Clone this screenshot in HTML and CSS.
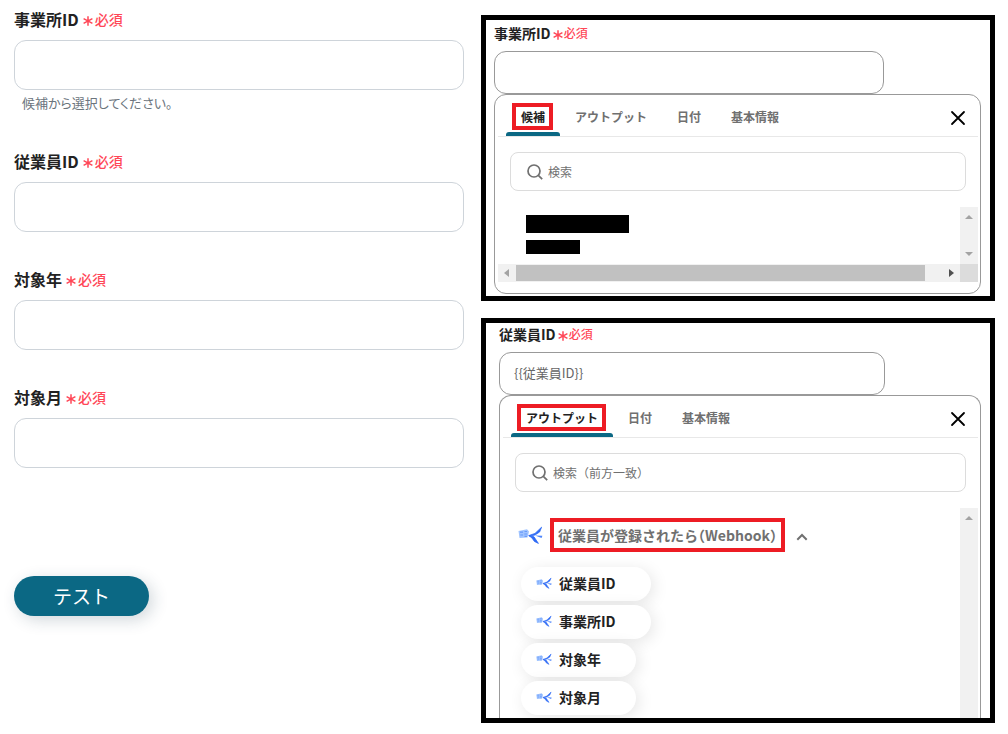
FILE: index.html
```html
<!DOCTYPE html>
<html lang="ja">
<head>
  <meta charset="UTF-8">
  <meta name="viewport" content="width=device-width, initial-scale=1.0">
  <title>テスト</title>
  <link rel="stylesheet" href="styles.css">
</head>
<body>
  <svg width="0" height="0" class="sprite" aria-hidden="true">
    <symbol id="asterisk" viewBox="0 0 10 10">
      <path d="M5 0.3V9.7M0.6 2.6L9.4 7.4M9.4 2.6L0.6 7.4" stroke="currentColor" stroke-width="1.5" fill="none"/>
    </symbol>
    <symbol id="close" viewBox="0 0 16 16">
      <path d="M2 2L14 14M14 2L2 14" stroke="currentColor" stroke-width="1.8" stroke-linecap="round" fill="none"/>
    </symbol>
    <symbol id="search" viewBox="0 0 16 16">
      <circle cx="7" cy="7" r="6" stroke="currentColor" stroke-width="1.7" fill="none"/>
      <path d="M11.3 11.3L15.2 15.2" stroke="currentColor" stroke-width="1.7" fill="none"/>
    </symbol>
    <symbol id="chevron" viewBox="0 0 12 8">
      <path d="M1.3 6.7L6 2L10.7 6.7" stroke="currentColor" stroke-width="2" fill="none"/>
    </symbol>
    <symbol id="app" viewBox="0 0 25 18">
      <path d="M0.5 5L9 3.2L11 5.5L9.5 11.5L1.5 12Z" fill="#9fc3ff"/>
      <path d="M2 6.2H5M2.3 9H5M6.5 5.5H9M6.3 8H9.2M6.5 10.3H9" stroke="#6a9bfa" stroke-width="1.2" fill="none"/>
      <g fill="#2f6bf5" stroke="#2f6bf5" stroke-width="0.8" stroke-linejoin="round">
        <path d="M10.8 9.6L17 7.4L23.6 1.2L21.6 6L17 9L12 10Z"/>
        <path d="M10.8 9.6L16 10.8L20.4 17.4L16.4 15.4L14 12Z"/>
      </g>
      <path d="M17 9.5L24.4 9.8L23.6 12Z" fill="#4f86fb"/>
    </symbol>
  </svg>

  <main class="layout">
    <form class="test-form">
      <div class="field">
        <label for="office">事業所ID <span class="required"><svg class="asterisk"><use href="#asterisk"/></svg>必須</span></label>
        <input type="text" id="office">
        <p class="help">候補から選択してください。</p>
      </div>
      <div class="field">
        <label for="employee">従業員ID <span class="required"><svg class="asterisk"><use href="#asterisk"/></svg>必須</span></label>
        <input type="text" id="employee">
      </div>
      <div class="field">
        <label for="year">対象年 <span class="required"><svg class="asterisk"><use href="#asterisk"/></svg>必須</span></label>
        <input type="text" id="year">
      </div>
      <div class="field">
        <label for="month">対象月 <span class="required"><svg class="asterisk"><use href="#asterisk"/></svg>必須</span></label>
        <input type="text" id="month">
      </div>
      <button type="button" class="test-btn">テスト</button>
    </form>

    <div class="panels">
      <section class="panel">
        <label class="panel-label" for="office-pick">事業所ID <span class="required"><svg class="asterisk"><use href="#asterisk"/></svg>必須</span></label>
        <input type="text" class="pick-input" id="office-pick">
        <div class="popup">
          <div class="tabs">
            <button type="button" class="tab active"><span class="mark">候補</span></button>
            <button type="button" class="tab">アウトプット</button>
            <button type="button" class="tab">日付</button>
            <button type="button" class="tab">基本情報</button>
            <button type="button" class="close" aria-label="閉じる"><svg><use href="#close"/></svg></button>
          </div>
          <div class="search">
            <svg><use href="#search"/></svg>
            <input type="text" placeholder="検索" aria-label="検索">
          </div>
          <div class="scroll-area">
            <div class="candidates">
              <div class="masked long"></div>
              <div class="masked short"></div>
            </div>
            <div class="scroll-y">
              <span class="arrow up"></span>
              <span class="arrow down"></span>
            </div>
            <div class="scroll-x">
              <span class="arrow left"></span>
              <span class="thumb"></span>
              <span class="arrow right"></span>
            </div>
            <div class="scroll-corner"></div>
          </div>
        </div>
      </section>

      <section class="panel output-panel">
        <label class="panel-label" for="employee-pick">従業員ID <span class="required"><svg class="asterisk"><use href="#asterisk"/></svg>必須</span></label>
        <input type="text" class="pick-input" id="employee-pick" value="{{従業員ID}}">
        <div class="popup cut">
          <div class="tabs">
            <button type="button" class="tab active"><span class="mark">アウトプット</span></button>
            <button type="button" class="tab">日付</button>
            <button type="button" class="tab">基本情報</button>
            <button type="button" class="close" aria-label="閉じる"><svg><use href="#close"/></svg></button>
          </div>
          <div class="search">
            <svg><use href="#search"/></svg>
            <input type="text" placeholder="検索（前方一致）" aria-label="検索（前方一致）">
          </div>
          <div class="scroll-area">
            <div class="outputs">
              <div class="group">
                <svg class="app-icon"><use href="#app"/></svg>
                <span class="mark">従業員が登録されたら（Webhook）</span>
                <svg class="chevron"><use href="#chevron"/></svg>
              </div>
              <div class="chips">
                <button type="button" class="chip"><svg><use href="#app"/></svg>従業員ID</button>
                <button type="button" class="chip"><svg><use href="#app"/></svg>事業所ID</button>
                <button type="button" class="chip"><svg><use href="#app"/></svg>対象年</button>
                <button type="button" class="chip"><svg><use href="#app"/></svg>対象月</button>
              </div>
            </div>
            <div class="scroll-y">
              <span class="arrow up"></span>
            </div>
          </div>
        </div>
      </section>
    </div>
  </main>
</body>
</html>
```
FILE: styles.css
```css
:root {
  --accent: #0b6884;
  --required: #ff4757;
  --mark: #ed1c24;
  --muted: #707070;
}

* {
  box-sizing: border-box;
}

body {
  margin: 0;
  background: #fff;
  color: #222;
  font-family: "Noto Sans CJK JP", sans-serif;
}

input, button {
  font-family: inherit;
  margin: 0;
}

button {
  padding: 0;
  border: none;
  background: none;
  cursor: pointer;
}

.sprite {
  position: absolute;
}

.layout {
  display: grid;
  grid-template-columns: 450fr 514fr;
  gap: 17px;
  padding: 0 13px 0 14px;
}

/* left form */
.test-form {
  padding-top: 8px;
}

.field {
  margin-bottom: 36px;
}

label {
  display: flex;
  align-items: center;
  gap: 4px;
  font-weight: bold;
}

.field label {
  height: 24px;
  margin-bottom: 8px;
  padding-bottom: 2px;
  font-size: 16px;
}

.required {
  display: flex;
  align-items: center;
  gap: 2px;
  color: var(--required);
  font-size: 14px;
  font-weight: 500;
}

.asterisk {
  width: 10px;
  height: 10px;
  margin-top: 4px;
}

.field input {
  display: block;
  width: 100%;
  height: 50px;
  padding: 0 16px;
  border: 1px solid #ced4da;
  border-radius: 12px;
  font-size: 16px;
}

.help {
  margin: 3px 0 0;
  padding: 0 0 1px 8px;
  color: #6c757d;
  font-size: 13px;
  font-feature-settings: "palt";
  line-height: 20px;
}

.test-btn {
  width: 135px;
  height: 40px;
  margin-top: 72px;
  padding-bottom: 2px;
  border-radius: 20px;
  background: var(--accent);
  color: #fff;
  font-size: 19px;
  box-shadow: 4px 4px 16px rgba(30, 60, 80, 0.2);
}

/* framed panels */
.panels {
  display: flex;
  flex-direction: column;
  gap: 17px;
  padding-top: 15px;
}

.panel {
  padding: 2px 9px 2px 8px;
  border: 5px solid #000;
  overflow: hidden;
}

.output-panel {
  padding: 0 9px 0 13px;
}

.panel-label {
  gap: 2px;
  height: 22px;
  margin-bottom: 7px;
  padding-bottom: 1px;
  font-size: 14px;
}

.panel-label .required {
  gap: 1px;
  font-size: 12px;
}

.pick-input {
  display: block;
  width: 80%;
  height: 43px;
  padding: 0 14px 2px;
  border: 1px solid #999;
  border-radius: 12px;
  color: #666;
  font-size: 13px;
}

.popup {
  padding-bottom: 11px;
  border: 1px solid #999;
  border-radius: 12px;
  background: #fff;
}

.popup.cut {
  padding-bottom: 0;
  border-bottom: none;
  border-radius: 12px 12px 0 0;
}

.tabs {
  display: flex;
  height: 42px;
  margin: 0 2px 0 3px;
  padding: 0 12px 0 8px;
  border-bottom: 1px solid #e8e8e8;
}

.tab {
  padding: 6px 15px 0;
  border-bottom: 4px solid transparent;
  color: var(--muted);
  font-size: 12px;
  font-weight: bold;
  line-height: 18px;
}

.tab.active {
  color: #222;
  position: relative;
}

.tab.active::after {
  content: "";
  position: absolute;
  left: 0;
  right: 0;
  bottom: -4px;
  height: 4px;
  border-radius: 3px 3px 0 0;
  background: var(--accent);
}

/* red frame around highlighted text */
.mark {
  position: relative;
}

.mark::after {
  content: "";
  position: absolute;
  inset: -5px -8px -5px -9px;
  border: 4px solid var(--mark);
}

.close {
  margin-left: auto;
  padding-top: 4px;
  color: #000;
}

.close svg {
  display: block;
  width: 16px;
  height: 16px;
}

.search {
  display: flex;
  align-items: center;
  gap: 5px;
  height: 39px;
  margin: 15px 14px 16px 15px;
  padding: 0 16px;
  border: 1px solid #dcdcdc;
  border-radius: 8px;
  color: var(--muted);
}

.search svg {
  flex: none;
  width: 16px;
  height: 16px;
}

.search input {
  flex: 1;
  padding: 0;
  border: none;
  background: none;
  font-size: 12px;
}

.search input::placeholder {
  color: var(--muted);
}

/* lists with their scroll bars */
.scroll-area {
  display: grid;
  grid-template-columns: 1fr 18px;
  margin: 0 2px 0 3px;
}

.candidates {
  padding: 8px 0 10px 28px;
}

.masked {
  background: #000;
}

.masked.long {
  width: 103px;
  height: 18px;
}

.masked.short {
  width: 54px;
  height: 14px;
  margin-top: 7px;
}

.scroll-y, .scroll-x {
  display: flex;
  align-items: center;
  justify-content: space-between;
  background: #f1f1f1;
}

.scroll-y {
  flex-direction: column;
  padding: 8px 0;
}

.scroll-x {
  height: 18px;
  padding: 0 6px;
}

.scroll-x .thumb {
  flex: 1;
  height: 16px;
  margin: 0 24px 0 7px;
  background: #c1c1c1;
}

.scroll-corner {
  background: #dcdcdc;
}

.arrow {
  border: 4px solid transparent;
}

.arrow.up {
  border-top: none;
  border-bottom-color: #a3a3a3;
}

.arrow.down {
  border-bottom: none;
  border-top-color: #a3a3a3;
}

.arrow.left {
  border-left: none;
  border-right: 5px solid #a3a3a3;
}

.arrow.right {
  border-right: none;
  border-left: 5px solid #505050;
}

.outputs {
  padding: 17px 0 3px 15px;
}

.group {
  display: flex;
  align-items: center;
  height: 20px;
  color: var(--muted);
  font-size: 14px;
  font-weight: bold;
  line-height: 20px;
}

.group .mark {
  margin: 0 19px 0 15px;
  font-feature-settings: "halt";
}

.group .mark::after {
  inset: -7px -8px;
}

.app-icon {
  width: 25px;
  height: 18px;
}

.chevron {
  width: 12px;
  height: 8px;
  margin-top: 4px;
}

.chips {
  display: flex;
  flex-direction: column;
  align-items: flex-start;
  gap: 4px;
  margin: 22px 0 0 3px;
}

.chip {
  display: flex;
  align-items: center;
  gap: 7px;
  height: 34px;
  padding: 0 35px 2px 15px;
  border-radius: 17px;
  background: #fff;
  color: #222;
  font-size: 14px;
  font-weight: bold;
  box-shadow: 3px 3px 16px rgba(0, 0, 0, 0.1);
}

.chip svg {
  width: 16px;
  height: 12px;
}
```
